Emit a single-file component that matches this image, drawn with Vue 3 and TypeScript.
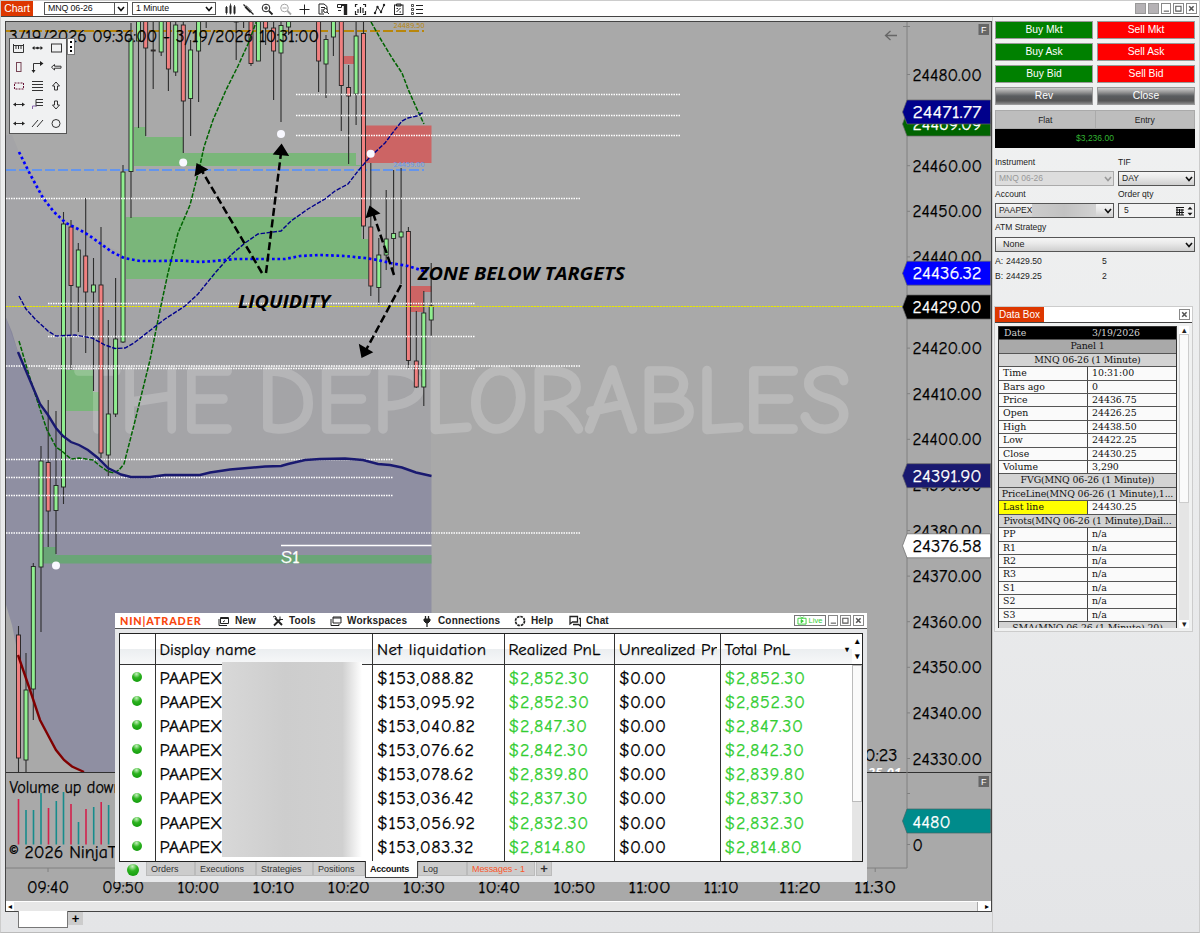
<script setup lang="ts">
interface Candle { x: number; h: number; l: number; t: number; b: number; up: boolean }
const raw: [number, number, number, number, number, number][] = [
  [18.5, 626, 772, 635, 758, 0], [26, 653, 772, 690, 760, 1], [33.3, 563, 720, 566.5, 689, 1],
  [41, 446, 632, 461, 567, 1], [48.2, 400, 547, 462.5, 511, 0], [56, 411, 554, 485.5, 510.5, 1],
  [63.5, 212, 504, 224, 487, 1], [71, 220, 370, 227, 285.5, 0], [78.3, 243, 332, 250, 287, 1],
  [85.7, 198, 353, 256, 292, 0], [93.5, 258, 391, 285, 292, 1], [101, 227, 458, 285, 453, 0],
  [108.3, 320, 476, 414, 455, 1], [115.6, 278, 417, 339, 414, 1], [123, 165, 343, 172, 342, 1],
  [131, 23, 218, 39, 171.5, 1], [138.5, 18, 128, 18, 41, 1], [145.7, 18, 136, 18, 48, 0],
  [153.2, 18, 89, 50, 51, 0], [161.2, 18, 56, 18, 52, 1], [168.4, 18, 91, 18, 69, 0],
  [175.7, 22, 76, 25, 72, 1], [183.3, 18, 153, 25, 101, 0], [190.6, 40, 136, 50, 98.5, 1],
  [198.6, 18, 102, 18, 51, 1], [206.2, 18, 28, 18, 18, 1], [236.2, 18, 60, 18, 22, 0],
  [243.6, 18, 28, 18, 18, 0], [251, 18, 66, 18, 63.5, 0], [258.4, 18, 61, 18, 61, 1],
  [265.6, 18, 45, 18, 28, 0], [273.6, 18, 100, 28, 51, 0], [281, 22, 122, 25.5, 53, 1],
  [288.6, 18, 35, 18, 27, 1], [318.6, 18, 92, 18, 61, 0], [326, 35, 98, 39.5, 64, 1],
  [333.4, 18, 56, 18, 37, 1], [341.3, 18, 131, 18, 85.5, 0], [348.6, 65, 164, 87.5, 96, 0],
  [356.1, 18, 125, 36, 94, 1], [363.5, 18, 239, 33.5, 226, 0], [370.8, 163, 296, 227, 286, 0],
  [378.8, 238, 305, 255, 287.5, 1], [386.2, 190, 270, 239, 255, 1], [393.6, 170, 274, 233.5, 238.5, 1],
  [401.1, 168, 284, 232, 237, 1], [408.4, 227, 368, 231.5, 360.5, 0], [416.3, 311, 388, 361, 387, 0],
  [423.8, 291, 406, 313, 387, 1], [431.2, 263, 336, 306, 320, 1],
]
const candles: Candle[] = raw.map(([x, h, l, t, b, u]) => ({ x, h, l, t, b, up: u === 1 }))

const dotted: [number, number, number][] = [
  [296, 680, 94.5], [296, 680, 115.5], [296, 680, 135.5], [6, 581, 198.5], [48, 475, 303.5],
  [48, 475, 336.5], [6, 581, 366], [48, 475, 368.5], [6, 393, 459.5], [6, 393, 477.5], [6, 393, 495.5], [6, 581, 533],
]
const prices = [24480, 24470, 24460, 24450, 24440, 24430, 24420, 24410, 24400, 24390, 24380, 24370, 24360, 24350, 24340, 24330]
  .map((p, i) => ({ label: p.toFixed(2), y: 74.5 + i * 45.6 }))
  .filter((_, i) => i !== 5 && i !== 1)
const tags = [
  { v: '24469.09', y: 124, fill: '#006400', white: true },
  { v: '24471.77', y: 112, fill: '#00008b', white: true },
  { v: '24436.32', y: 273.2, fill: '#0000ff', white: true },
  { v: '24429.00', y: 307, fill: '#000', white: true },
  { v: '24391.90', y: 475.7, fill: '#191970', white: true },
  { v: '24376.58', y: 545.8, fill: '#fff', white: false },
]
const times = ['09:40', '09:50', '10:00', '10:10', '10:20', '10:30', '10:40', '10:50', '11:00', '11:10', '11:20', '11:30']
const vols: [number, number, boolean][] = [
  [18.5, 799, false], [26, 810, true], [33.5, 810, true], [41, 793, true], [48.5, 808, false], [56.3, 801, true],
  [63.5, 792, true], [71, 804, false], [78.5, 822, true], [86, 809, false], [93.7, 807, true], [101.2, 802, false], [108.6, 805, true],
]
const accounts = [
  ['$153,088.82', '$2,852.30'], ['$153,095.92', '$2,852.30'], ['$153,040.82', '$2,847.30'], ['$153,076.62', '$2,842.30'],
  ['$153,078.62', '$2,839.80'], ['$153,036.42', '$2,837.30'], ['$153,056.92', '$2,832.30'], ['$153,083.32', '$2,814.80'],
]
type DataRow = { k: string; v?: string; c?: string }
const data: DataRow[] = [
  { k: 'Date', v: '3/19/2026', c: 'date' }, { k: 'Panel 1', c: 'head dark' }, { k: 'MNQ 06-26 (1 Minute)', c: 'head' },
  { k: 'Time', v: '10:31:00' }, { k: 'Bars ago', v: '0' }, { k: 'Price', v: '24436.75' }, { k: 'Open', v: '24426.25' },
  { k: 'High', v: '24438.50' }, { k: 'Low', v: '24422.25' }, { k: 'Close', v: '24430.25' }, { k: 'Volume', v: '3,290' },
  { k: 'FVG(MNQ 06-26 (1 Minute))', c: 'head' }, { k: 'PriceLine(MNQ 06-26 (1 Minute),1...', c: 'head' },
  { k: 'Last line', v: '24430.25', c: 'last' }, { k: 'Pivots(MNQ 06-26 (1 Minute),Dail...', c: 'head' },
  { k: 'PP', v: 'n/a' }, { k: 'R1', v: 'n/a' }, { k: 'R2', v: 'n/a' }, { k: 'R3', v: 'n/a' },
  { k: 'S1', v: 'n/a' }, { k: 'S2', v: 'n/a' }, { k: 'S3', v: 'n/a' }, { k: 'SMA(MNQ 06-26 (1 Minute),20)', c: 'head' },
]
const navy = '18,352 29,378 40,404 48,415 56,428 63,436 71,442 79,445 88,450 98,458 108,468 116,472 121,474.5 131,477 150,477 165,475 200,475 210,472.5 230,469.5 265,466.5 281,466 288,464 305,460 320,459 345,458.5 363,460 378,464 390,465 402,467.5 416,472.5 431.5,476'
</script>

<template>
  <div class="app">
    <header class="titlebar">
      <span class="tab">Chart</span>
      <div class="pick sym"><span>MNQ 06-26</span><i><svg viewBox="0 0 8 6"><path d="M1 1l3 3.6L7 1" /></svg></i></div>
      <div class="pick per"><span>1 Minute</span><i><svg viewBox="0 0 8 6"><path d="M1 1l3 3.6L7 1" /></svg></i></div>
      <svg class="tools" width="204" height="16" viewBox="221 0 204 16">
        <path d="M226.500 6v6M230.500 4.500v8M234.500 5.500v7" stroke-width="2" />
        <path d="M230.500 2.500v11M226.500 5v8.500M234.500 4v9.500" stroke-width=".8" />
        <path d="M245.500 5.500l5.500 5.500" stroke-width="2.600" /><path d="M243.500 3.500l2 2M251 11l2.500 2.500" stroke-width="1.200" />
        <path d="M246.500 5.500l5.500 5.500" stroke="#aaa" stroke-width=".7" />
        <circle cx="266" cy="7" r="3.800" /><path d="M269 10l3.500 3.500" stroke-width="1.800" /><path d="M264 7h4M266 5v4" />
        <g opacity=".4"><circle cx="284.500" cy="7" r="3.800" /><path d="M287.500 10l3.500 3.500" stroke-width="1.800" /><path d="M282.500 7h4" /></g>
        <path d="M299.500 8.500h10M304.500 3.500v10" />
        <path d="M327 8V5.500l-3-2.500h-5v10h5M321 6.500h4M321 9h2M321 11h2" /><circle cx="325.500" cy="9.500" r="2" /><path d="M327 11l2 2" />
        <path d="M337.500 3.500h4v3h-4zM338 9.500h3" /><path d="M345.500 3v11" stroke-width="3.400" /><path d="M341 4h4" stroke-width="2" />
        <path d="M355.500 6V3.500h2M363 3.500h2.500V6M355.500 10v3.500h2M363 13.500h2.500V10M358 12V8M360.500 12V6M363 12V7" stroke-width="1.200" />
        <path d="M375 12l2.500-6 3.500 5 3-7" /><g class="solid"><circle cx="375" cy="12" r="1.200" /><circle cx="377.500" cy="6" r="1.200" /><circle cx="381" cy="11" r="1.200" /><circle cx="384" cy="4" r="1.200" /></g>
        <rect x="394.500" y="4" width="8.500" height="9.500" /><path d="M396.500 3h4.500v2h-4.500zM396.500 11l4-4M396.500 7.500h1.500M399.500 11h1.500" />
        <path d="M416 4.500h7M416 8.500h7M416 12.500h7" stroke-width="1.100" /><path d="M411.500 3.500h2v2h-2zM411.500 7.500h2v2h-2zM411.500 11.500h2v2h-2z" stroke-width=".8" />
      </svg>
      <div class="wincontrols">
        <b class="grey" /><b class="grey" />
        <b><svg viewBox="0 0 10 10"><path d="M2 8h6" /></svg></b>
        <b><svg viewBox="0 0 10 10"><path d="M2 2.500h6v5.500H2z" /></svg></b>
        <b><svg viewBox="0 0 10 10"><path d="M2.500 2.500l5 5M7.500 2.500l-5 5" stroke-width="1.800" /></svg></b>
      </div>
    </header>

    <div class="body">
      <main class="chartcol">
        <div class="chart">
          <svg class="canvas" width="985" height="879" viewBox="6 22 985 879">
            <path d="M6 318 L12 332 L18 352 L6 352z" fill="#191970" opacity=".22" />
            <polygon :points="'6,318 ' + navy + ' 431.5,772 84,772 72,767 64,760 56,750 40,720 30,690 18,655 12,625 6,605'" fill="#8f8fa2" />
            <polygon points="12,135 19,152 54,212 100,243 140,261 281,259 345,256 431,271 431,476 345,458 165,475 121,474 71,442 40,404 18,352 6,318 6,135" fill="#7d7d9a" opacity=".1" />
            <path d="M134 127h12v10h37v16h173v12h8v1H134zM126 217h235.500v22h7v40H126zM66 370h27v22h6v19H66z" fill="#7ab67a" />
            <path d="M43 547h13v8h375.500v8.500H43z" fill="#6aa577" />
            <path d="M365.500 125.500h66V163h-66zM411 286h20.500v6H423v20h-12zM343 56h11v8h-11z" fill="#cc6464" />
            <text class="mark" x="75" y="432" textLength="158" lengthAdjust="spacingAndGlyphs">THE</text>
            <text class="mark" x="257" y="432" textLength="594" lengthAdjust="spacingAndGlyphs">DEPLORABLES</text>

            <path d="M6 31H424" stroke="#b8860b" stroke-width="2" stroke-dasharray="10 3" />
            <path d="M6 170H424" stroke="#6495ed" stroke-width="2" stroke-dasharray="10 3" />
            <text class="tiny" x="393.500" y="27.500" fill="#b8860b" textLength="31">24489.50</text>
            <text class="tiny" x="393.500" y="166.500" fill="#6495ed" textLength="31">24459.00</text>

            <g v-for="c in candles" :key="c.x">
              <path :d="`M${c.x} ${c.h}V${c.l}`" stroke="#2d2d2d" stroke-width="1.100" />
              <rect v-if="c.b > c.t" :x="c.x - 2" :y="c.t" width="4" :height="c.b - c.t" :fill="c.up ? '#90ee90' : '#f08080'" stroke="#222" stroke-width=".9" />
            </g>

            <path v-for="(d, i) in dotted" :key="i" :d="`M${d[0]} ${d[2]}H${d[1]}`" stroke="#fff" stroke-width="1.500" stroke-dasharray="1.500 1" />
            <path d="M281 545.500H431.500" stroke="#fff" stroke-width="1.500" />
            <path d="M6 306.500H903" stroke="#bcbc69" stroke-width="1" />
            <path d="M6 306.500H903" stroke="#e8e800" stroke-width="1" stroke-dasharray="2 1" />

            <g fill="none">
              <polyline points="19,341 29,375 40,409 47,430 56,447 63,452 71,459 79,458 93,460 100,466 108,471.500 114,473 119,470 124,464 134,425 150,360 160,310 168,273 178,233 190,205 199,170 204,147 213,120 226,90 238,66 248,44 257,20" stroke="#006400" stroke-width="1.500" stroke-dasharray="4.500 1.500" />
              <polyline points="371,22 380,38 392,58 402,73 408,89 416,107 424,124" stroke="#006400" stroke-width="1.500" stroke-dasharray="4.500 1.500" />
              <polyline points="19,296 26,309 36,320 48,331 56,336 75,335 92,338 105,345 115,348.500 125,348 134,343 148,332 165,319 185,306 198,294 215,273 231,255 245,243 258,234 281,231 291,221 308,209 325,199 335,191 348,184 358,171 370,157 385,143 394,131 402,121 408,118 417,116 424,112" stroke="#00008b" stroke-width="1.400" stroke-dasharray="4.500 1.500" />
              <polyline :points="navy" stroke="#191970" stroke-width="2.400" />
              <polyline points="18,655 30,690 40,720 49,737 56,750 64,760 72,766.500 84,772" stroke="#800000" stroke-width="2.400" />
              <polyline points="19,152 30,174 43,198 54,212 66,223 80,230 90,236 101,244 112,252 124,258 140,261 160,261 180,260.500 200,262 215,261 235,259 260,259 285,259 300,256 320,255 345,256 365,258 378,260 390,263 408,266 427,272" stroke="#0000ff" stroke-width="2.700" stroke-dasharray="2.700 2.700" />
            </g>
            <g fill="#f8f8ff"><circle cx="183.200" cy="162.500" r="4" /><circle cx="281" cy="134" r="4" /><circle cx="370.700" cy="153.800" r="4" /><circle cx="56" cy="565.500" r="4" /></g>
            <path d="M262 273L202 171M266 273L281 153M394 275L373 213M401 285L366 350" stroke="#000" stroke-width="2.500" stroke-dasharray="8 3.500" fill="none" />
            <path d="M196.500 163l11.800 6.500-13.800 7zM281.600 143.500l7.600 12.500-16.500-1.500zM369.500 205.500l11 8-15 4.800zM358.800 343.800l14.500 8.500-11.800 5.700z" />

            <text class="note" x="238" y="308" textLength="92" lengthAdjust="spacingAndGlyphs">LIQUIDITY</text>
            <text class="note" x="418" y="280" textLength="207" lengthAdjust="spacingAndGlyphs">ZONE BELOW TARGETS</text>
            <text class="lab w" x="281" y="563" textLength="19" lengthAdjust="spacingAndGlyphs">S1</text>
            <text class="lab" x="9" y="41.500" textLength="310" lengthAdjust="spacingAndGlyphs">3/19/2026 09:36:00 - 3/19/2026 10:31:00</text>

            <path d="M6 772.500H991" stroke="#303030" /><path d="M907 22V868H6" stroke="#808080" fill="none" />
            <path d="M897 35.500h-11M890.500 31l-5 4.500 5 4.500" stroke="#666" fill="none" stroke-width="1.300" />
            <path d="M903 26.500h7M907 793.500h3M907 844.500h3" stroke="#808080" />
            <g v-for="p in prices" :key="p.label">
              <path :d="`M907 ${p.y}h3`" stroke="#808080" />
              <text class="lab" x="912.500" :y="p.y + 6" textLength="69.500" lengthAdjust="spacingAndGlyphs">{{ p.label }}</text>
            </g>
            <g v-for="t in tags" :key="t.v">
              <path :d="`M902.500 ${t.y}L907 ${t.y - 12}H990.500V${t.y + 12}H907z`" :fill="t.fill" stroke="#666" stroke-width=".7" />
              <text class="lab" :class="{ w: t.white }" x="912.500" :y="t.y + 6" textLength="69" lengthAdjust="spacingAndGlyphs">{{ t.v }}</text>
            </g>
            <path d="M902.500 821L907 809H990.500V833H907z" fill="#008b8b" stroke="#466" stroke-width=".7" />
            <text class="lab w" x="912.500" y="828" textLength="38" lengthAdjust="spacingAndGlyphs">4480</text>
            <text class="lab" x="912.500" y="850.500">0</text>
            <g v-for="y in [24, 776]" :key="y">
              <rect x="978.500" :y="y" width="10.500" height="11" fill="#666" /><text class="f" x="981" :y="y + 9">F</text>
            </g>
            <text class="lab" x="864.500" y="761" textLength="33" lengthAdjust="spacingAndGlyphs">0:23</text>
            <svg x="866" y="766" width="40" height="6" viewBox="866 766 40 6"><text class="stamp" x="868" y="777" textLength="33">25.01</text></svg>

            <text class="lab" x="9.500" y="793" textLength="113" lengthAdjust="spacingAndGlyphs">Volume up down</text>
            <path v-for="v in vols" :key="v[0]" :d="`M${v[0]} ${v[1]}V844.500`" :stroke="v[2] ? '#178c8c' : '#d3214c'" stroke-width="1.600" />
            <text class="lab" x="9" y="858" textLength="184" lengthAdjust="spacingAndGlyphs">© 2026 NinjaTrader, LLC</text>
            <g v-for="(t, i) in times" :key="t">
              <path :d="`M${48 + i * 75.200} 868v4`" stroke="#808080" />
              <text class="lab" :x="27 + i * 75.200" y="893" :textLength="t.startsWith('11:1') ? 35 : 42" lengthAdjust="spacingAndGlyphs">{{ t }}</text>
            </g>
          </svg>
          <div class="hscroll"><span>◂</span><i /><span>▸</span></div>

          <div class="palette">
            <svg width="57" height="94" viewBox="9 39 57 94">
              <path d="M13.500 45.500h10v7h-10zM13.500 44v3M16 45v4M18.500 45v4M21 45v4M23.500 44v3" />
              <path d="M33 48h9" /><path d="M32 48l2.500-2v4zM43 48l-2.500-2v4z" class="s" /><circle cx="37.500" cy="48" r="1.300" class="s" />
              <rect x="51.500" y="44" width="10" height="8" />
              <rect x="16.500" y="62.500" width="4.500" height="9" stroke="#745" />
              <path d="M33.500 71.500v-8h8" /><path d="M40 61l3.500 2.500L40 66zM31.500 70h4l-2 3z" class="s" />
              <path d="M51.500 67.200l3-2.700v1.700h6.500v2h-6.500v1.800z" />
              <rect x="14.500" y="83" width="9" height="6" stroke-dasharray="2 1" stroke="#613" />
              <path d="M32 81.500h11M32 84.500h11M32 87.500h11M32 90.500h11" />
              <path d="M56 82l3.500 4h-2v4h-3v-4h-2z" />
              <path d="M15 104.500h8" /><path d="M13 104.500l3-2v4zM25 104.500l-3-2v4z" class="s" />
              <path d="M36 99.500h7M36 102.500h7M36 105.500h7M36 99.500v7" /><path d="M32.500 109v-3h4" stroke="#86a" />
              <path d="M56 109l3.500-4h-2v-4h-3v4h-2z" />
              <path d="M15 123.500h8" /><path d="M13 123.500l3-2v4zM25 123.500l-3-2v4z" class="s" />
              <path d="M32 127l6-7M37 127l6-7" /><circle cx="56" cy="123.500" r="4" />
            </svg>
            <span class="grip"><i /><i /><i /></span>
          </div>
        </div>
        <footer class="tabs"><span class="sheet" /><span class="plus">+</span></footer>
      </main>

      <aside class="side">
        <div class="orders">
          <button class="buy">Buy Mkt</button><button class="sell">Sell Mkt</button>
          <button class="buy">Buy Ask</button><button class="sell">Sell Ask</button>
          <button class="buy">Buy Bid</button><button class="sell">Sell Bid</button>
          <button class="alt">Rev</button><button class="alt">Close</button>
        </div>
        <div class="pos"><span>Flat</span><span>Entry</span></div>
        <div class="pnl">$3,236.00</div>
        <div class="form">
          <label>Instrument</label><label>TIF</label>
          <div class="sel off">MNQ 06-26<svg viewBox="0 0 8 6"><path d="M1 1l3 3.600L7 1" /></svg></div>
          <div class="sel">DAY<svg viewBox="0 0 8 6"><path d="M1 1l3 3.600L7 1" /></svg></div>
          <label>Account</label><label>Order qty</label>
          <div class="sel acct">PAAPEX<em /><svg viewBox="0 0 8 6"><path d="M1 1l3 3.600L7 1" /></svg></div>
          <div class="sel qty">5
            <svg class="calc" viewBox="0 0 18 10"><path d="M1 1.500h8M1 4h8M1 6.500h8M1 9h8M2 1v8M4.500 3v6M7 3v6" /><path d="M12.500 3.500L15 .8l2.500 2.700zM12.500 6.800L15 9.500l2.500-2.700z" class="fill" /></svg>
          </div>
          <label class="wide">ATM Strategy</label>
          <div class="sel wide none">None<svg viewBox="0 0 8 6"><path d="M1 1l3 3.600L7 1" /></svg></div>
        </div>
        <div class="quotes"><span>A:</span><span>24429.50</span><span>5</span><span>B:</span><span>24429.25</span><span>2</span></div>

        <section class="databox">
          <div class="dbhead"><span>Data Box</span><b><svg viewBox="0 0 10 10"><path d="M2.500 2.500l5 5M7.500 2.500l-5 5" stroke-width="1.800" /></svg></b></div>
          <div class="dbbody">
            <div class="grid">
              <div v-for="(r, i) in data" :key="i" class="dr" :class="r.c">
                <span>{{ r.k }}</span><span v-if="r.v">{{ r.v }}</span>
              </div>
            </div>
            <div class="vscroll"><u>▴</u><i /><u>▾</u></div>
          </div>
        </section>
      </aside>
    </div>

    <section class="center">
      <div class="chead">
        <strong class="logo">NIN|ATRADER</strong>
        <span class="m m1"><svg viewBox="0 0 12 12"><path d="M2.500 2.500h8v6h-8zM1 4v6.500h8M2.500 3.500h8M5 7l2-1.500" /></svg>New</span>
        <span class="m m2"><svg viewBox="0 0 12 12"><path d="M3 3l7 7M2 10.500l6-6" stroke-width="1.900" /><path d="M1 2l2-1 1.500 2M8 1.500v3h3" /></svg>Tools</span>
        <span class="m m3"><svg viewBox="0 0 12 12"><path d="M3 2h8v6H3zM1 4v6.500h8V9M3 3h8" /></svg>Workspaces</span>
        <span class="m m4"><svg viewBox="0 0 12 12"><path d="M4.500 1v3M7.500 1v3M6 7v5" stroke-width="1.300" /><path d="M3 4h6v2L7 8H5L3 6z" fill="#222" /></svg>Connections</span>
        <span class="m m5"><svg viewBox="0 0 12 12"><circle cx="6" cy="6" r="4.500" stroke-dasharray="2.600 .9" stroke-width="1.700" /></svg>Help</span>
        <span class="m m6"><svg viewBox="0 0 12 12"><path d="M1 1.500h7.500v5.500H3.500L1 9zM10 3.500h1.500V11L9.500 9.500H4" stroke-width="1.300" /></svg>Chat</span>
        <span class="live"><svg viewBox="0 0 11 10"><path d="M1 2.500h9v6.500H1zM3.500 .5l2 2 2-2" /><path d="M4.500 4v3.500L7 5.700z" fill="#32cd32" /></svg>Live</span>
        <b><svg viewBox="0 0 10 10"><path d="M2 8h6" /></svg></b>
        <b><svg viewBox="0 0 10 10"><path d="M2 2.500h6v5.500H2z" /></svg></b>
        <b><svg viewBox="0 0 10 10"><path d="M2.500 2.500l5 5M7.500 2.500l-5 5" stroke-width="1.800" /></svg></b>
      </div>
      <div class="table">
        <div class="row th">
          <span /><span>Display name</span><span class="wide-t">Net liquidation</span><span>Realized PnL</span><span class="unr"><q>Unrealized PnL</q></span><span>Total PnL<small>▾</small></span>
        </div>
        <div v-for="(a, i) in accounts" :key="i" class="row td">
          <span class="dotcell"><i class="dot" /></span><span class="nm">PAAPEX</span><span>{{ a[0] }}</span><span class="g">{{ a[1] }}</span><span class="z">$0.00</span><span class="g">{{ a[1] }}</span>
        </div>
        <div class="row rest"><span /><span /><span /><span /><span /><span /></div>
        <div class="redact" />
        <div class="tscroll"><div><u>▴</u><u>▾</u></div><i /></div>
      </div>
      <div class="ctabs">
        <i class="dot big" />
        <span class="t1">Orders</span><span class="t2">Executions</span><span class="t3">Strategies</span><span class="t4">Positions</span>
        <span class="on">Accounts</span><span class="t6">Log</span><span class="t7">Messages - 1</span><span class="tp">+</span>
      </div>
    </section>
  </div>
</template>

<style>
html, body { margin: 0; overflow: hidden; }
</style>
<style scoped>
* { box-sizing: border-box; }
.app { position: relative; width: 1200px; height: 933px; background: #e8e9ea; font-family: "Liberation Sans", Arial, sans-serif; display: flex; flex-direction: column; overflow: hidden; color: #000; border-left: 1px solid #ccc; border-right: 1px solid #ccc; border-bottom: 1px solid #bbb; }
i { font-style: normal; display: block; }
.titlebar { height: 17px; flex: none; background: #fff; border-top: 1px solid #ccc; border-bottom: 1px solid #444; display: flex; align-items: center; }
.tab { width: 32px; height: 15px; background: #dd3700; color: #fff; font-size: 10.500px; line-height: 15px; text-align: center; }
.pick { height: 13px; border: 1px solid #555; background: #fff; display: flex; font-size: 8.800px; line-height: 11px; padding-left: 3px; color: #111; }
.pick span { flex: 1; letter-spacing: -.1px; }
.pick i { width: 13px; display: flex; align-items: center; justify-content: center; }
.pick svg { width: 8px; height: 6px; fill: none; stroke: #111; stroke-width: 1.600; }
.sym { width: 84px; margin-left: 11px; }
.sym i { border-left: 1px solid #555; }
.per { width: 84px; margin-left: 4px; }
.tools { margin-left: 5px; fill: none; stroke: #222; stroke-width: 1; }
.tools .solid { fill: #222; stroke: none; }
.wincontrols { margin-left: auto; display: flex; gap: 2px; padding-right: 2px; }
.wincontrols b, .chead b, .dbhead b { display: block; width: 10.800px; height: 11px; border: 1px solid #888; background: #fff; }
.wincontrols b.grey { background: #b5b2b5; border-color: #999; }
b svg { display: block; width: 100%; height: 100%; fill: none; stroke: #555; stroke-width: 1.200; }
.body { flex: 1; display: flex; min-height: 0; }
.chartcol { width: 991px; flex: none; padding: 4px 0 0 4px; display: flex; flex-direction: column; background: linear-gradient(#eeefef, #e4e5e7); }
.chart { position: relative; width: 987px; height: 891px; border: 1px solid #444; background: #a9a9a9; }
.canvas { display: block; }
.mark, .lab, .table { font-family: "Comic Sans MS", "Comic Neue", "Noto Sans", sans-serif; }
.mark { font-size: 95px; font-weight: 400; fill: #fff; opacity: .19; stroke: #fff; stroke-width: 3.500; stroke-linejoin: round; }
.tiny { font-size: 7px; font-family: "Noto Sans", sans-serif; }
.lab { font-size: 17px; fill: #000; stroke: #000; stroke-width: .25; }
.lab.w { fill: #fff; stroke: #fff; }
.note { font: italic bold 18.500px "Open Sans", "Noto Sans", sans-serif; }
.f { font: 9px "Liberation Sans", sans-serif; fill: #fff; }
.stamp { font: italic bold 12.500px "Noto Sans", sans-serif; fill: #fff; }
.hscroll { height: 10px; background: #fff; display: flex; align-items: center; justify-content: space-between; font-size: 8px; line-height: 9px; }
.hscroll span { width: 8px; text-align: center; }
.hscroll i { flex: 1; height: 9px; background: #e7e7e7; border-right: 5px solid #fff; box-shadow: inset -1px 0 #aaa; }
.palette { position: absolute; left: 3px; top: 16px; width: 58px; height: 96px; border: 1px solid #555; background: #f0f1f2; }
.palette svg { display: block; margin-left: -1px; fill: none; stroke: #333; stroke-width: 1; }
.palette .s { fill: #222; stroke: none; }
.grip { position: absolute; left: 57px; top: -1px; width: 8px; height: 17px; background: #fff; border: 1px solid #777; display: flex; flex-direction: column; align-items: center; justify-content: space-evenly; }
.grip i { width: 2px; height: 2px; background: #000; }
.tabs { display: flex; padding-left: 13px; }
.sheet { width: 50px; height: 17px; margin-top: -1px; background: #fff; border: 1px solid #777; border-top: 0; z-index: 1; }
.plus { width: 15px; height: 13px; background: #ccc; font-size: 13px; font-weight: bold; line-height: 13px; text-align: center; }
.side { flex: 1; padding: 4px 4px 0 3px; background: linear-gradient(#f1f2f2, #e4e5e7); min-width: 0; display: flex; flex-direction: column; font-size: 8.500px; color: #222; border-left: 1px solid #ccc; }
.orders { display: grid; grid-template-columns: 98px 98px; column-gap: 4px; row-gap: 4px; margin-left: -1px; }
.orders button { height: 18px; border: 1px solid #999; padding: 0; font: 10.300px/16px "Liberation Sans", sans-serif; color: #fff; }
.orders .buy { background: #008000; }
.orders .sell { background: #f00; }
.orders .alt { background: linear-gradient(#ccc 0%, #999 25%, #5a5d60 50%, #555 80%, #888 100%); }
.pos { margin: 5px 0 0 -1px; width: 200px; height: 19px; background: #bdbdbd; border: 1px solid #aaa; display: flex; line-height: 18px; text-align: center; }
.pos span { flex: 1; }
.pos span + span { border-left: 1px solid #aaa; }
.pnl { margin-left: -1px; width: 200px; height: 19px; background: #000; color: #32b332; text-align: center; line-height: 19px; }
.form { display: grid; grid-template-columns: 119px 77px; column-gap: 4px; margin: 7px 0 0 -1px; width: 200px; }
.form label { height: 16px; line-height: 15px; white-space: nowrap; }
.form label:nth-of-type(n+3) { height: 17px; line-height: 17px; }
.form .wide { grid-column: 1 / 3; }
.form .wide:is(label) { height: 19px; line-height: 19px; }
.sel { height: 15px; border: 1px solid #555; background: linear-gradient(#f6f6f6, #e8e8e8 45%, #cfcfcf); display: flex; align-items: center; padding-left: 3px; line-height: 13px; }
.sel svg { width: 8px; height: 6px; margin: 0 1px 0 auto; fill: none; stroke: #111; stroke-width: 1.600; }
.off { background: #ddd; color: #999; border-color: #aaa; }
.off svg { stroke: #999; }
.acct em { width: 64px; height: 13px; background: linear-gradient(90deg, #ccc, #c2c2c2, #d2d2d2); }
.qty { background: #f2f2f2; padding-left: 5px; }
.sel .calc { width: 18px; height: 10px; stroke-width: 1; }
.calc .fill { fill: #111; stroke: none; }
.none { padding-left: 7px; font-size: 9px; }
.quotes { display: grid; grid-template-columns: 11px 96px 20px; row-gap: 5px; line-height: 10px; margin: 4px 0 0 -1px; font-size: 8.600px; }
.databox { margin: 25px 0 0 -2px; width: 199px; height: 326px; border: 1px solid #ccc; background: #f0f1f1; }
.dbhead { height: 16px; background: #fff; border-bottom: 1px solid #444; display: flex; justify-content: space-between; align-items: center; padding-right: 2px; }
.dbhead span { background: #dd3700; color: #fff; font-size: 10px; line-height: 15px; height: 15px; width: 49px; text-align: center; white-space: nowrap; }
.dbbody { display: flex; margin: 3px 0 0 3px; height: 302px; gap: 2px; }
.grid { width: 179px; height: 302px; overflow: hidden; border: 1px solid #333; border-bottom: 0; font: 9.400px/12.600px "DejaVu Serif", serif; color: #111; }
.dr { display: flex; height: 13.420px; background: #fafafa; border-bottom: 1px solid #555; white-space: nowrap; }
.dr span { padding-left: 4px; flex: 1; }
.dr span + span { border-left: 1px solid #444; }
.dr span:first-child { width: 88px; flex: none; }
.dr.head { background: #d3d3d3; justify-content: center; }
.dr.head.dark { background: #a9a9a9; }
.dr.head span:first-child { padding: 0; width: auto; letter-spacing: -.12px; }
.dr.date { background: #000; color: #d0d0d0; }
.dr.date span { border: 0; padding-left: 5px; }
.dr.last span:first-child { background: #ff0; }
.vscroll { width: 10px; display: flex; flex-direction: column; background: #e5e5e5; }
.vscroll u, .tscroll u { text-decoration: none; font-size: 9px; line-height: 8px; height: 8px; text-align: center; background: #fff; display: block; }
.vscroll i { height: 169px; background: #fafafa; border: 1px solid #ccc; margin-bottom: auto; }
.center { position: absolute; left: 114px; top: 613px; width: 752px; height: 269px; background: #e6e7e9; }
.chead { height: 16px; background: #fff; border-bottom: 1px solid #555; display: flex; align-items: center; padding: 0 3px 0 5px; gap: 2px; }
.logo { color: #f9470f; font: 900 10.800px "Lato", sans-serif; letter-spacing: .85px; width: 82px; margin-right: 14px; white-space: nowrap; }
.m { display: flex; align-items: center; font-size: 10px; font-weight: bold; color: #222; white-space: nowrap; letter-spacing: .15px; }
.m svg { width: 12px; height: 12px; fill: none; stroke: #222; stroke-width: 1; margin-right: 5px; flex: none; }
.m1 { width: 52px; }
.m2 { width: 56px; }
.m3 { width: 89px; }
.m4 { width: 91px; }
.m5 { width: 53px; }
.m6 { width: 50px; }
.live { margin-left: auto; width: 32px; height: 11px; border: 1px solid #777; color: #32cd32; font-size: 7.500px; display: flex; align-items: center; padding-left: 2px; gap: 2px; }
.live svg { width: 10px; height: 9px; fill: none; stroke: #32cd32; }
.table { position: relative; margin: 4px 0 0 4px; width: 744px; height: 229px; border: 1px solid #222; background: #fff; overflow: hidden; display: flex; flex-direction: column; -webkit-text-stroke: .25px; }
.row { display: grid; grid-template-columns: 35.500px 217.500px 131.500px 110.500px 105.500px 142px; flex: none; }
.row > span { border-right: 1px solid #333; padding-left: 4px; overflow: hidden; white-space: nowrap; }
.row > span:last-child { border-right: 0; }
.th { height: 31px; line-height: 31px; border-bottom: 1px solid #333; background: linear-gradient(#fff 50%, #ebeef0 50%, #f7f8f9); }
.th span { font-size: 16.800px; letter-spacing: .05px; }
.th .wide-t { letter-spacing: .45px; }
.unr q { quotes: none; display: block; width: 98px; overflow: hidden; }
.th small { float: right; font-size: 8px; margin-right: 13px; }
.td { height: 24.100px; line-height: 27px; font-size: 18px; letter-spacing: .6px; }
.td .nm { letter-spacing: -.15px; }
.td .z { letter-spacing: .1px; }
.rest { flex: 1; }
.g { color: #32cd32; letter-spacing: .75px; }
.dotcell { display: flex; align-items: center; }
.dot { width: 10px; height: 10px; margin-left: 8px; border-radius: 50%; background: radial-gradient(circle at 45% 20%, #c7f1bf 0, #2db320 40%, #129b0c 85%); }
.redact { position: absolute; left: 102px; top: 28px; width: 140px; height: 195px; background: linear-gradient(90deg, #d8d8d8 0, #cdcdcd 45%, #d0d0d0 86%, #fff 100%); }
.tscroll { position: absolute; right: 0; top: 0; width: 10px; height: 227px; background: #e5e5e5; display: flex; flex-direction: column; }
.tscroll div { height: 31px; background: #fff; border-bottom: 1px solid #333; display: flex; flex-direction: column; justify-content: space-between; padding: 3px 0 4px; }
.tscroll i { height: 137px; background: #fafafa; border: 1px solid #bbb; }
.ctabs { display: flex; height: 18px; align-items: flex-start; font-size: 9px; color: #333; }
.ctabs span { height: 14px; line-height: 15px; background: #ccc; border: 1px solid #bbb; border-top: 0; padding-left: 4px; white-space: nowrap; }
.dot.big { width: 12px; height: 12px; margin: 2px 7px 0 12px; flex: none; }
.t1 { width: 49px; }
.t2 { width: 61px; }
.t3 { width: 57px; }
.t4 { width: 52px; }
.ctabs .on { width: 53px; height: 17px; margin-top: -1px; background: #fff; font-weight: bold; border: 1px solid #444; border-top: 0; color: #111; line-height: 17px; z-index: 1; letter-spacing: -.25px; }
.t6 { width: 49px; }
.ctabs .t7 { width: 68px; color: #f9572b; letter-spacing: -.1px; }
.ctabs .tp { width: 16px; padding: 0; text-align: center; font-size: 13px; font-weight: bold; margin-left: 1px; line-height: 13px; }
</style>
